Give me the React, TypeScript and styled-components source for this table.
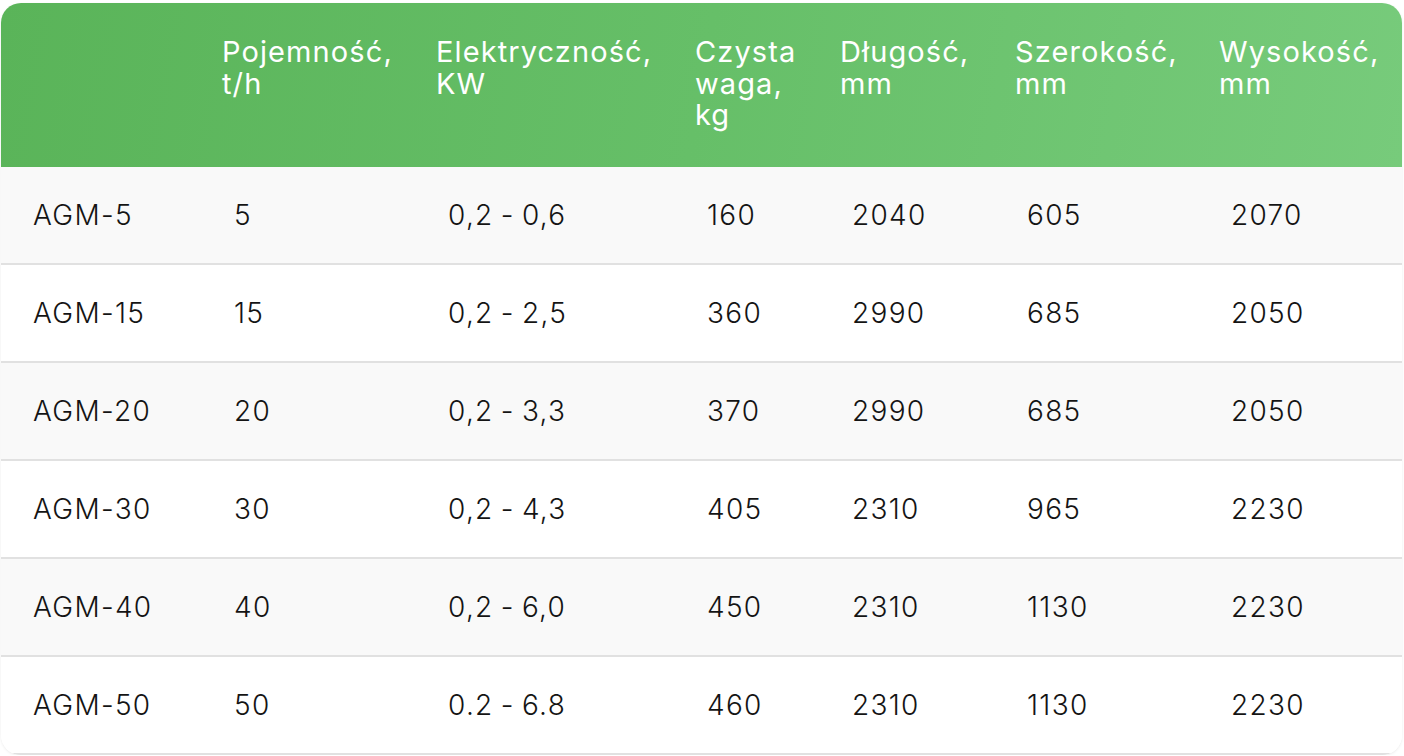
import React from "react";
import styled, { createGlobalStyle } from "styled-components";

const GlobalStyle = createGlobalStyle`
  html, body { margin: 0; padding: 0; background: #ffffff; }
  body { font-family: Inter, "Noto Sans", sans-serif; }
`;

const COLUMNS = "201px 214px 259px 145px 175px 204px 1fr";

const Page = styled.div`
  padding: 3px 2px 0 1px;
`;

const Table = styled.div`
  border-radius: 20px;
  overflow: hidden;
  background: #ffffff;
  box-shadow: 0 1px 3px rgba(0, 0, 0, 0.08);
`;

const HeaderRow = styled.div`
  display: grid;
  grid-template-columns: ${COLUMNS};
  height: 164px;
  background: linear-gradient(100deg, #5ab459 0%, #66bf68 50%, #77cb7b 100%);
`;

const HeaderCell = styled.div`
  padding: 33px 0 0 20px;
  color: #ffffff;
  font-size: 29px;
  font-weight: 400;
  letter-spacing: 1.1px;
  line-height: 31.5px;
  white-space: nowrap;
`;

const Row = styled.div<{ $shaded: boolean }>`
  display: grid;
  grid-template-columns: ${COLUMNS};
  height: 96px;
  align-items: center;
  background: ${(p) => (p.$shaded ? "#f9f9f9" : "#ffffff")};
  border-bottom: 2px solid #e1e1e1;
`;

const Cell = styled.div`
  padding-left: 32px;
  color: #141414;
  font-size: 28px;
  font-weight: 300;
  letter-spacing: 1.3px;
  word-spacing: -2px;
  line-height: 32px;
  white-space: nowrap;
`;

const headers: string[][] = [
  [""],
  ["Pojemność,", "t/h"],
  ["Elektryczność,", "KW"],
  ["Czysta", "waga,", "kg"],
  ["Długość,", "mm"],
  ["Szerokość,", "mm"],
  ["Wysokość,", "mm"],
];

const rows: string[][] = [
  ["AGM-5", "5", "0,2 - 0,6", "160", "2040", "605", "2070"],
  ["AGM-15", "15", "0,2 - 2,5", "360", "2990", "685", "2050"],
  ["AGM-20", "20", "0,2 - 3,3", "370", "2990", "685", "2050"],
  ["AGM-30", "30", "0,2 - 4,3", "405", "2310", "965", "2230"],
  ["AGM-40", "40", "0,2 - 6,0", "450", "2310", "1130", "2230"],
  ["AGM-50", "50", "0.2 - 6.8", "460", "2310", "1130", "2230"],
];

export default function App() {
  return (
    <>
      <GlobalStyle />
      <Page>
        <Table>
          <HeaderRow>
            {headers.map((lines, i) => (
              <HeaderCell key={i}>
                {lines.map((l, j) => (
                  <React.Fragment key={j}>
                    {l}
                    {j < lines.length - 1 && <br />}
                  </React.Fragment>
                ))}
              </HeaderCell>
            ))}
          </HeaderRow>
          {rows.map((r, i) => (
            <Row key={i} $shaded={i % 2 === 0}>
              {r.map((c, j) => (
                <Cell key={j}>{c}</Cell>
              ))}
            </Row>
          ))}
        </Table>
      </Page>
    </>
  );
}
